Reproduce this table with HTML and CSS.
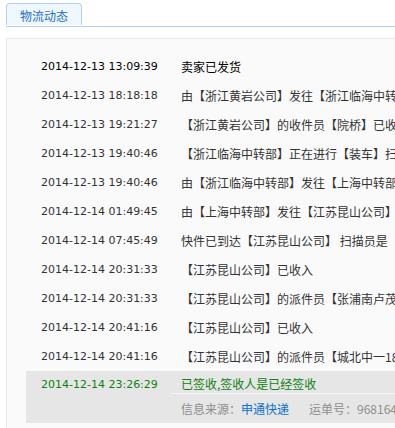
FILE: index.html
```html
<!DOCTYPE html>
<html lang="zh-CN">
<head>
<meta charset="utf-8">
<title>物流动态</title>
<link rel="stylesheet" href="styles.css">
</head>
<body>
<div class="page">
  <div class="tabs">
    <div class="tab">物流动态</div>
  </div>
  <div class="box">
    <div class="row first"><div class="time">2014-12-13 13:09:39</div><div class="info">卖家已发货</div></div>
    <div class="row"><div class="time">2014-12-13 18:18:18</div><div class="info">由【浙江黄岩公司】发往【浙江临海中转部】</div></div>
    <div class="row"><div class="time">2014-12-13 19:21:27</div><div class="info">【浙江黄岩公司】的收件员【院桥】已收件</div></div>
    <div class="row"><div class="time">2014-12-13 19:40:46</div><div class="info">【浙江临海中转部】正在进行【装车】扫描</div></div>
    <div class="row"><div class="time">2014-12-13 19:40:46</div><div class="info">由【浙江临海中转部】发往【上海中转部】</div></div>
    <div class="row"><div class="time">2014-12-14 01:49:45</div><div class="info">由【上海中转部】发往【江苏昆山公司】</div></div>
    <div class="row"><div class="time">2014-12-14 07:45:49</div><div class="info">快件已到达【江苏昆山公司】 扫描员是【张浦】上一站是【上海中转部】</div></div>
    <div class="row"><div class="time">2014-12-14 20:31:33</div><div class="info">【江苏昆山公司】已收入</div></div>
    <div class="row"><div class="time">2014-12-14 20:31:33</div><div class="info">【江苏昆山公司】的派件员【张浦南卢茂】正在派件</div></div>
    <div class="row"><div class="time">2014-12-14 20:41:16</div><div class="info">【江苏昆山公司】已收入</div></div>
    <div class="row"><div class="time">2014-12-14 20:41:16</div><div class="info">【江苏昆山公司】的派件员【城北中一18862627】正在派件</div></div>
    <div class="row last">
      <div class="time">2014-12-14 23:26:29</div>
      <div class="info">
        <div class="signed">已签收,签收人是已经签收</div>
        <div class="source"><span class="label">信息来源：</span><span class="company">申通快递</span><span class="label waybill">运单号：968164532910</span></div>
      </div>
    </div>
  </div>
</div>
</body>
</html>
```

FILE: styles.css
```css
html, body {
  margin: 0;
  padding: 0;
  overflow: hidden;
  background: #fff;
}

.page {
  padding: 3px 0 0 6px;
  font-family: "Noto Sans CJK SC", sans-serif;
  font-size: 12px;
  color: #333;
}

.tabs {
  display: flex;
  border-bottom: 1px solid #b4d0f2;
  height: 23px;
}

.tab {
  width: 76px;
  height: 22px;
  box-sizing: border-box;
  padding-top: 2px;
  line-height: 19px;
  text-align: center;
  color: #1f6dc2;
  background: #eff7ff;
  border: 1px solid #b4d0f2;
  border-bottom: none;
  border-radius: 4px 4px 0 0;
}

.box {
  margin-top: 11px;
  background: #fafafa;
  border: 1px solid #e8e8e8;
  border-right: none;
  padding: 13px 0 20px 19px;
  white-space: nowrap;
}

.row {
  display: flex;
  height: 29px;
  line-height: 29px;
}

.time {
  flex: none;
  width: 130px;
  padding-left: 15px;
  font-family: "DejaVu Sans", sans-serif;
  font-size: 11px;
}

.info {
  flex: 1;
  padding-left: 10px;
}

.first .time,
.first .info {
  color: #000;
}

.row.last {
  height: 52px;
  background: #e6e6e6;
  align-items: flex-start;
}

.last .time {
  padding-top: 3px;
  line-height: 22px;
  color: #10800f;
}

.last .info {
  padding-left: 0;
}

.signed {
  padding: 3px 0 0 10px;
  line-height: 19px;
  color: #10800f;
  border-bottom: 1px solid #f6f6f6;
}

.source {
  padding-left: 10px;
  line-height: 29px;
}

.label {
  color: #8e8e8e;
}

.company {
  color: #0a72c9;
}

.waybill {
  margin-left: 20px;
}
```
